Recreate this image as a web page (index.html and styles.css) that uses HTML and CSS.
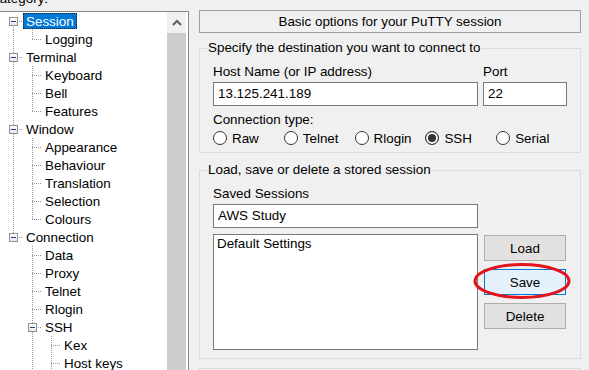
FILE: index.html
```html
<!DOCTYPE html>
<html lang="en">
<head>
    <meta charset="UTF-8">
    <meta name="viewport" content="width=device-width, initial-scale=1.0">
    <title>PuTTY Configuration</title>
    <link rel="stylesheet" href="styles.css">
</head>
<body>
    <div class="window">
        <div class="left">
            <div class="cat-label">Category:</div>
            <div class="tree">
                <div class="tree-rows">
                    <div class="row"><span class="cell box-first"><i class="box"></i></span><span class="name selected">Session</span></div>
                    <div class="row"><span class="cell pipe"></span><span class="cell elbow"></span><span class="name">Logging</span></div>
                    <div class="row"><span class="cell box-mid"><i class="box"></i></span><span class="name">Terminal</span></div>
                    <div class="row"><span class="cell pipe"></span><span class="cell tee"></span><span class="name">Keyboard</span></div>
                    <div class="row"><span class="cell pipe"></span><span class="cell tee"></span><span class="name">Bell</span></div>
                    <div class="row"><span class="cell pipe"></span><span class="cell elbow"></span><span class="name">Features</span></div>
                    <div class="row"><span class="cell box-mid"><i class="box"></i></span><span class="name">Window</span></div>
                    <div class="row"><span class="cell pipe"></span><span class="cell tee"></span><span class="name">Appearance</span></div>
                    <div class="row"><span class="cell pipe"></span><span class="cell tee"></span><span class="name">Behaviour</span></div>
                    <div class="row"><span class="cell pipe"></span><span class="cell tee"></span><span class="name">Translation</span></div>
                    <div class="row"><span class="cell pipe"></span><span class="cell tee"></span><span class="name">Selection</span></div>
                    <div class="row"><span class="cell pipe"></span><span class="cell elbow"></span><span class="name">Colours</span></div>
                    <div class="row"><span class="cell box-last"><i class="box"></i></span><span class="name">Connection</span></div>
                    <div class="row"><span class="cell"></span><span class="cell tee"></span><span class="name">Data</span></div>
                    <div class="row"><span class="cell"></span><span class="cell tee"></span><span class="name">Proxy</span></div>
                    <div class="row"><span class="cell"></span><span class="cell tee"></span><span class="name">Telnet</span></div>
                    <div class="row"><span class="cell"></span><span class="cell tee"></span><span class="name">Rlogin</span></div>
                    <div class="row"><span class="cell"></span><span class="cell box-mid"><i class="box"></i></span><span class="name">SSH</span></div>
                    <div class="row"><span class="cell"></span><span class="cell pipe"></span><span class="cell tee"></span><span class="name">Kex</span></div>
                    <div class="row"><span class="cell"></span><span class="cell pipe"></span><span class="cell tee"></span><span class="name">Host keys</span></div>
                </div>
                <div class="scrollbar">
                    <div class="scroll-up">
                        <svg width="10" height="7" viewBox="0 0 10 7"><polyline points="1,6 5,2 9,6" fill="none" stroke="#606060" stroke-width="2"/></svg>
                    </div>
                    <div class="thumb"></div>
                </div>
            </div>
        </div>

        <div class="right">
            <div class="panel-title">Basic options for your PuTTY session</div>

            <fieldset class="group dest">
                <legend>Specify the destination you want to connect to</legend>
                <div class="host-row">
                    <div class="host">
                        <div class="label">Host Name (or IP address)</div>
                        <div class="input">13.125.241.189</div>
                    </div>
                    <div class="port">
                        <div class="label">Port</div>
                        <div class="input">22</div>
                    </div>
                </div>
                <div class="label conn-label">Connection type:</div>
                <div class="radios">
                    <div class="radio"><span class="dot"></span>Raw</div>
                    <div class="radio"><span class="dot"></span>Telnet</div>
                    <div class="radio"><span class="dot"></span>Rlogin</div>
                    <div class="radio"><span class="dot checked"></span>SSH</div>
                    <div class="radio"><span class="dot"></span>Serial</div>
                </div>
            </fieldset>

            <fieldset class="group sessions">
                <legend>Load, save or delete a stored session</legend>
                <div class="label">Saved Sessions</div>
                <div class="input wide">AWS Study</div>
                <div class="session-row">
                    <div class="listbox">
                        <div class="list-item">Default Settings</div>
                    </div>
                    <div class="buttons">
                        <button>Load</button>
                        <div class="save-wrap">
                            <button class="focused">Save</button>
                            <!-- red circle drawn over the Save button -->
                            <svg class="mark" width="98" height="36" viewBox="0 0 98 36"><ellipse cx="49" cy="18" rx="47" ry="16.5" fill="none" stroke="#e3141c" stroke-width="3"/></svg>
                        </div>
                        <button>Delete</button>
                    </div>
                </div>
            </fieldset>

            <div class="group-next"></div>
        </div>
    </div>
</body>
</html>
```

FILE: styles.css
```css
:root {
    --dotv: repeating-linear-gradient(to bottom, #9a9a9a 0 1px, transparent 1px 2px);
    --doth: repeating-linear-gradient(to right, #9a9a9a 0 1px, transparent 1px 2px);
}

body {
    font-family: 'Liberation Sans', Arial, sans-serif;
    font-size: 13.4px;
    color: #000;
    background-color: #f0f0f0;
    margin: 0;
    padding: 0;
    height: 370px;
    overflow: hidden;
}

.window {
    display: flex;
    gap: 10px;
}

/* left side: category tree */
.left {
    width: 199px;
    margin-left: -10px;
    margin-top: -9px;
    flex: none;
}

.cat-label {
    height: 16px;
    line-height: 16px;
    margin-bottom: 4px;
}

.tree {
    display: flex;
    height: 400px;
    border: 1px solid #828790;
    background: #fff;
}

.tree-rows {
    flex: 1;
    padding-left: 13px;
}

.row {
    display: flex;
    height: 18px;
    line-height: 18px;
}

.cell {
    width: 19px;
    height: 18px;
    flex: none;
    display: flex;
    justify-content: center;
}

.pipe {
    background: var(--dotv) 9px 0 / 1px 18px no-repeat;
}

.tee,
.box-mid {
    background: var(--dotv) 9px 0 / 1px 18px no-repeat,
                var(--doth) 9px 9px / 10px 1px no-repeat;
}

.elbow,
.box-last {
    background: var(--dotv) 9px 0 / 1px 10px no-repeat,
                var(--doth) 9px 9px / 10px 1px no-repeat;
}

.box-first {
    background: var(--dotv) 9px 9px / 1px 9px no-repeat,
                var(--doth) 9px 9px / 10px 1px no-repeat;
}

.box {
    width: 9px;
    height: 9px;
    margin-top: 5px;
    box-sizing: border-box;
    border: 1px solid #919191;
    background: linear-gradient(#1f3f8f, #1f3f8f) center / 5px 1px no-repeat,
                linear-gradient(#fff, #e8e8e8);
}

.name {
    display: inline-block;
    height: 16px;
    line-height: 16px;
    margin-top: 1px;
    padding: 0 2px;
    border: 1px dotted transparent;
    box-sizing: border-box;
    white-space: nowrap;
}

.name.selected {
    background: #0078d7;
    color: #fff;
    border-color: #222;
}

.scrollbar {
    width: 19px;
    margin-right: 2px;
    flex: none;
    display: flex;
    flex-direction: column;
}

.scroll-up {
    height: 21px;
    background: #f0f0f0;
    display: flex;
    justify-content: center;
    align-items: center;
}

.thumb {
    flex: 1;
    background: #cdcdcd;
}

/* right side: session options */
.right {
    width: 382px;
    flex: none;
    padding-top: 10px;
}

.panel-title {
    height: 23px;
    line-height: 21px;
    box-sizing: border-box;
    border: 1px solid #a0a0a0;
    text-align: center;
}

.group {
    margin: 0;
    border: 1px solid #dcdcdc;
    padding: 8px 13px 6px;
    min-width: 0;
}

.group legend {
    padding: 0 1px;
    margin-left: -6px;
    line-height: 16px;
}

.dest {
    margin-top: 7px;
}

.sessions {
    margin-top: 9px;
    padding-bottom: 8px;
}

.group-next {
    margin-top: 9px;
    height: 20px;
    border: 1px solid #dcdcdc;
}

.label {
    height: 16px;
    line-height: 16px;
    margin-bottom: 2px;
}

.input {
    height: 24px;
    line-height: 22px;
    box-sizing: border-box;
    border: 1px solid #7a7a7a;
    background: #fff;
    padding: 0 4px;
}

.host-row {
    display: flex;
    gap: 5px;
}

.host,
.wide {
    width: 265px;
}

.port {
    width: 84px;
}

.conn-label {
    margin-top: 6px;
}

.radios {
    display: flex;
    height: 16px;
    align-items: center;
}

.radio {
    width: 72px;
    display: flex;
    align-items: center;
    gap: 5px;
}

.dot {
    width: 14px;
    height: 14px;
    box-sizing: border-box;
    border: 1px solid #333;
    border-radius: 50%;
    background: #fff;
}

.dot.checked {
    background: #333;
    box-shadow: inset 0 0 0 2px #fff;
}

.session-row {
    display: flex;
    gap: 6px;
    margin-top: 6px;
}

.listbox {
    width: 265px;
    height: 116px;
    box-sizing: border-box;
    border: 1px solid #7a7a7a;
    background: #fff;
}

.list-item {
    line-height: 18px;
    padding: 0 3px;
}

.buttons {
    width: 82px;
    margin-top: 1px;
}

button {
    display: block;
    width: 82px;
    height: 26px;
    margin-bottom: 8px;
    padding: 0;
    font-family: inherit;
    font-size: inherit;
    color: #000;
    background: #e1e1e1;
    border: 1px solid #adadad;
}

button.focused {
    background: #e5f1fb;
    border-color: #0078d7;
}

.save-wrap {
    position: relative;
}

.mark {
    position: absolute;
    left: -11px;
    top: -6px;
}
```
